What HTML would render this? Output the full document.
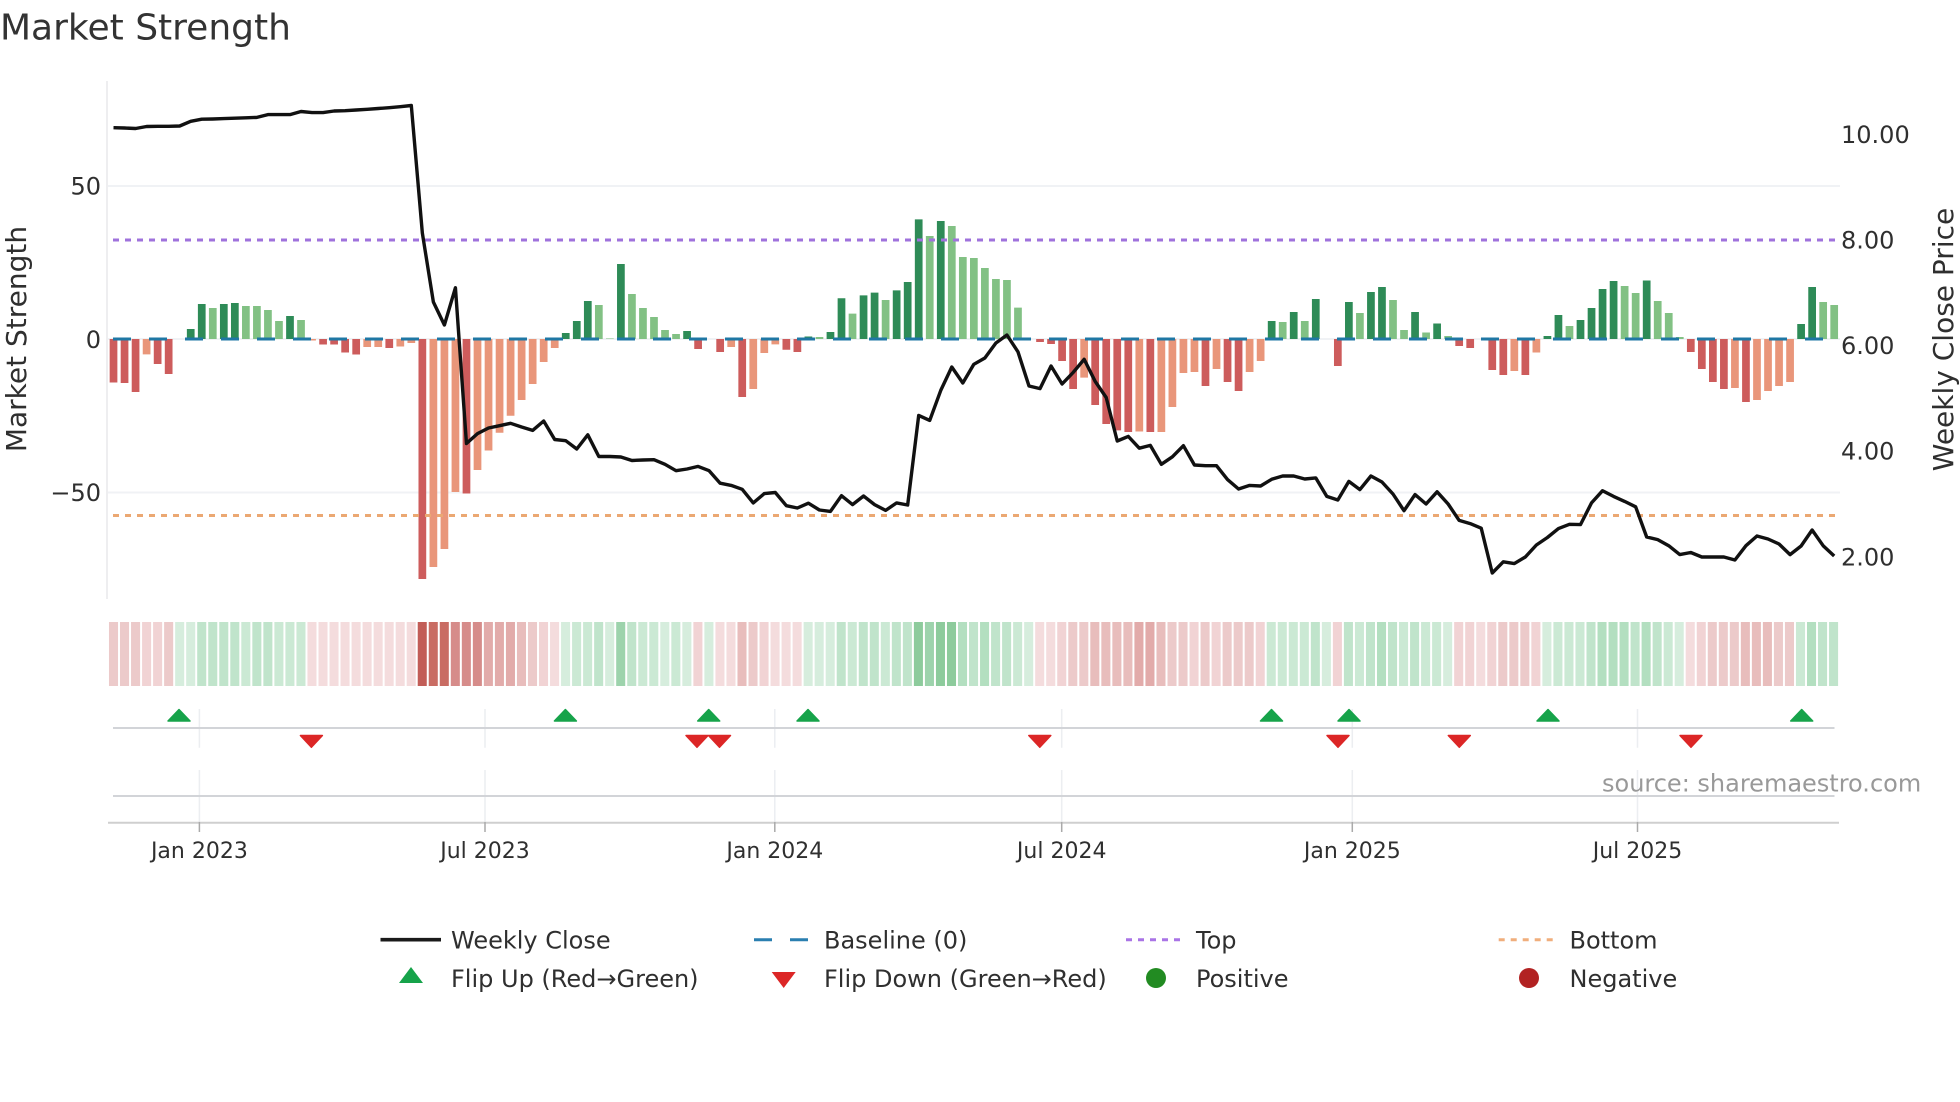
<!DOCTYPE html>
<html><head><meta charset="utf-8"><title>Market Strength</title>
<style>
html,body{margin:0;padding:0;background:#fff}
svg{display:block}
text{font-family:"DejaVu Sans","Liberation Sans",sans-serif;fill:#2f2f2f}
.t{font-size:24px}.x{font-size:22px;text-anchor:middle}
.l{font-size:24px}
</style></head><body>
<svg width="1960" height="1102" viewBox="0 0 1960 1102" xmlns="http://www.w3.org/2000/svg">
<rect width="1960" height="1102" fill="#fff"/>
<text x="0" y="39.5" style="font-size:36px;fill:#333">Market Strength</text>

<!-- axis / grid -->
<path d="M107 81V599" stroke="#e9e9eb" stroke-width="1.5" fill="none"/>
<path d="M108 186H1840M108 339H1840M108 492.5H1840" stroke="#f0f2f5" stroke-width="2" fill="none"/>

<!-- bars -->
<g transform="translate(108,339) scale(11.03,1)" fill="none" stroke-width=".7">
<path stroke="#2e8b57" d="M7.5 0V-10M8.5 0V-35M10.5 0V-35M11.5 0V-36M16.5 0V-23M41.5 0V-6M42.5 0V-18M43.5 0V-38M46.5 0V-75M52.5 0V-8M63.5 0V-2.5M65.5 0V-7M66.5 0V-40.7M68.5 0V-43.6M69.5 0V-46.4M71.5 0V-48.6M72.5 0V-57M73.5 0V-119.6M75.5 0V-118M105.5 0V-18M107.5 0V-27M109.5 0V-40M112.5 0V-37M114.5 0V-47M115.5 0V-52M118.5 0V-27M120.5 0V-15.5M130.5 0V-3M131.5 0V-24M133.5 0V-19M134.5 0V-31M135.5 0V-50M136.5 0V-58M139.5 0V-58.5M153.5 0V-15M154.5 0V-52"/>
<path stroke="#82c184" d="M9.5 0V-31M12.5 0V-33M13.5 0V-33M14.5 0V-29M15.5 0V-18M17.5 0V-19M44.5 0V-34M45.5 0V-.5M47.5 0V-45M48.5 0V-31M49.5 0V-22M50.5 0V-9M51.5 0V-5M64.5 0V-2M67.5 0V-25.4M70.5 0V-39M74.5 0V-103M76.5 0V-113M77.5 0V-82M78.5 0V-81M79.5 0V-71M80.5 0V-60M81.5 0V-59M82.5 0V-31.4M106.5 0V-17M108.5 0V-18M113.5 0V-26M116.5 0V-39M117.5 0V-9M119.5 0V-6.5M121.5 0V-3M132.5 0V-13M137.5 0V-53M138.5 0V-46M140.5 0V-38M141.5 0V-26M142.5 0V-2M155.5 0V-37M156.5 0V-34"/>
<path stroke="#cd5c5c" d="M.5 0V43.5M1.5 0V44M2.5 0V53M4.5 0V25M5.5 0V35M19.5 0V5.5M20.5 0V5.5M21.5 0V13.5M22.5 0V15.5M25.5 0V9M28.5 0V240M32.5 0V154.5M53.5 0V10M55.5 0V13M57.5 0V58M61.5 0V10.7M62.5 0V13M84.5 0V3M85.5 0V5M86.5 0V22M87.5 0V50M89.5 0V66M90.5 0V85M91.5 0V91.4M92.5 0V93M94.5 0V93M99.5 0V47M101.5 0V43M102.5 0V52M111.5 0V27M122.5 0V7M123.5 0V9M125.5 0V31M126.5 0V36M128.5 0V36M143.5 0V13M144.5 0V30M145.5 0V43M146.5 0V50M148.5 0V63"/>
<path stroke="#e9967a" d="M3.5 0V15.4M18.5 0V1.5M23.5 0V8M24.5 0V8M26.5 0V7.5M27.5 0V4M29.5 0V228M30.5 0V210M31.5 0V153M33.5 0V131M34.5 0V111.5M35.5 0V93.7M36.5 0V76.7M37.5 0V61M38.5 0V45M39.5 0V23M40.5 0V9M56.5 0V8M58.5 0V50M59.5 0V14M60.5 0V5.4M88.5 0V38.6M93.5 0V92.5M95.5 0V93M96.5 0V68M97.5 0V34M98.5 0V33M100.5 0V30M103.5 0V33M104.5 0V22M127.5 0V32M129.5 0V13.5M147.5 0V49M149.5 0V61M150.5 0V52M151.5 0V47M152.5 0V43"/>
</g>

<!-- reference lines -->
<path d="M113 339H1836" stroke="#1f77a4" stroke-width="3" stroke-dasharray="18 18" fill="none"/>
<path d="M113 240H1836" stroke="#9f72dc" stroke-width="3" stroke-dasharray="6 6" fill="none"/>
<path d="M113 515.5H1836" stroke="#eba873" stroke-width="3" stroke-dasharray="6 6" fill="none"/>

<!-- price line -->
<g transform="translate(113.5,0) scale(11.03,1)">
<polyline vector-effect="non-scaling-stroke" fill="none" stroke="#111" stroke-width="3.4" stroke-linejoin="round" points="0,127.7 1,128 2,128.5 3,126.5 4,126.3 5,126.3 6,126 7,121.3 8,119.2 9,119 10,118.6 11,118.2 12,117.8 13,117.4 14,114.6 15,114.6 16,114.6 17,111.5 18,112.6 19,112.6 20,111 21,110.7 22,110 23,109.3 24,108.5 25,107.7 26,106.7 27,105.5 28,233 29,302 30,325 31,287.7 32,443.5 33,433.6 34,428 35,425.7 36,423.3 37,427 38,430.4 39,421 40,439.5 41,440.7 42,449 43,434.8 44,456.5 45,456.5 46,457 47,460.5 48,460 49,459.7 50,464.3 51,470.7 52,469 53,466.4 54,470.7 55,483.2 56,485.4 57,489.3 58,502.9 59,493.6 60,492.5 61,505.7 62,508 63,503.2 64,510 65,511.4 66,495.7 67,504.6 68,496 69,504.6 70,510.4 71,502.9 72,505 73,415.4 74,420.4 75,390.4 76,367 77,383 78,364.3 79,358 80,343 81,335 82,351.8 83,386 84,388.6 85,366 86,384 87,372.5 88,359.3 89,381.4 90,397.5 91,441 92,436.4 93,448.2 94,445.4 95,464.3 96,456.8 97,445.7 98,465 99,465.7 100,465.7 101,479.6 102,489 103,485.4 104,486 105,479.3 106,476 107,476 108,479 109,477.9 110,496.4 111,500 112,481.4 113,489.6 114,476 115,482 116,494 117,510.7 118,494.6 119,504 120,491.8 121,504 122,520.4 123,523.6 124,528.2 125,573 126,561.8 127,563.6 128,557 129,545 130,537.5 131,528.6 132,524.3 133,524.6 134,502.9 135,490.7 136,496.4 137,501.4 138,506.8 139,537 140,539.6 141,545.7 142,554.6 143,552.5 144,557 145,557 146,557 147,560 148,545.7 149,536 150,539 151,544 152,554.6 153,546 154,530 155,545.7 156,556"/>
</g>

<!-- heat strip -->
<g transform="translate(108,0) scale(11.026,1)" fill="none" stroke-width=".82">
<path stroke="#f4dcdd" d="M18.5 622v64M19.5 622v64M20.5 622v64M21.5 622v64M22.5 622v64M23.5 622v64M24.5 622v64M25.5 622v64M26.5 622v64M27.5 622v64M40.5 622v64M55.5 622v64M56.5 622v64M60.5 622v64M61.5 622v64M62.5 622v64M84.5 622v64M85.5 622v64M124.5 622v64M143.5 622v64"/>
<path stroke="#f1d3d4" d="M3.5 622v64M4.5 622v64M39.5 622v64M53.5 622v64M59.5 622v64M86.5 622v64M98.5 622v64M100.5 622v64M104.5 622v64M111.5 622v64M122.5 622v64M123.5 622v64M125.5 622v64M129.5 622v64M144.5 622v64"/>
<path stroke="#eccaca" d="M0.5 622v64M1.5 622v64M2.5 622v64M5.5 622v64M38.5 622v64M58.5 622v64M87.5 622v64M88.5 622v64M96.5 622v64M97.5 622v64M99.5 622v64M101.5 622v64M102.5 622v64M103.5 622v64M126.5 622v64M127.5 622v64M128.5 622v64M145.5 622v64M146.5 622v64M147.5 622v64M151.5 622v64M152.5 622v64"/>
<path stroke="#e8bdbc" d="M37.5 622v64M57.5 622v64M89.5 622v64M90.5 622v64M91.5 622v64M92.5 622v64M95.5 622v64M148.5 622v64M149.5 622v64M150.5 622v64"/>
<path stroke="#e2abaa" d="M34.5 622v64M35.5 622v64M36.5 622v64M93.5 622v64M94.5 622v64"/>
<path stroke="#d68c8a" d="M31.5 622v64M32.5 622v64M33.5 622v64"/>
<path stroke="#c96c63" d="M29.5 622v64M30.5 622v64"/>
<path stroke="#c25d57" d="M28.5 622v64"/>
<path stroke="#d6eddd" d="M6.5 622v64M7.5 622v64M41.5 622v64M45.5 622v64M50.5 622v64M52.5 622v64M54.5 622v64M63.5 622v64M64.5 622v64M65.5 622v64M83.5 622v64M110.5 622v64M121.5 622v64M130.5 622v64M142.5 622v64"/>
<path stroke="#cbe9d4" d="M12.5 622v64M15.5 622v64M16.5 622v64M17.5 622v64M42.5 622v64M43.5 622v64M48.5 622v64M49.5 622v64M51.5 622v64M67.5 622v64M70.5 622v64M82.5 622v64M105.5 622v64M106.5 622v64M107.5 622v64M108.5 622v64M113.5 622v64M117.5 622v64M119.5 622v64M120.5 622v64M131.5 622v64M132.5 622v64M133.5 622v64M141.5 622v64M153.5 622v64"/>
<path stroke="#c0e4cb" d="M8.5 622v64M9.5 622v64M10.5 622v64M11.5 622v64M13.5 622v64M14.5 622v64M44.5 622v64M47.5 622v64M66.5 622v64M68.5 622v64M69.5 622v64M71.5 622v64M72.5 622v64M78.5 622v64M80.5 622v64M81.5 622v64M109.5 622v64M112.5 622v64M114.5 622v64M116.5 622v64M118.5 622v64M134.5 622v64M138.5 622v64M140.5 622v64M155.5 622v64M156.5 622v64"/>
<path stroke="#b3dfc0" d="M77.5 622v64M79.5 622v64M115.5 622v64M135.5 622v64M136.5 622v64M137.5 622v64M139.5 622v64M154.5 622v64"/>
<path stroke="#9dd3ac" d="M46.5 622v64M74.5 622v64"/>
<path stroke="#8dcb9c" d="M73.5 622v64M75.5 622v64M76.5 622v64"/>
</g>

<!-- flips panel -->
<path d="M199.4 709V747.7M485 709V747.7M774.8 709V747.7M1061.7 709V747.7M1352.3 709V747.7M1637.5 709V747.7M199.4 770V822M485 770V822M774.8 770V822M1061.7 770V822M1352.3 770V822M1637.5 770V822" stroke="#eceef1" stroke-width="1.5" fill="none"/>
<path d="M113 728H1834.5M113 796H1834.5" stroke="#d2d4d8" stroke-width="2" fill="none"/>
<path d="M108 822.7H1839" stroke="#cfcfcf" stroke-width="2" fill="none"/>
<path d="M199.4 822V832M485 822V832M774.8 822V832M1061.7 822V832M1352.3 822V832M1637.5 822V832" stroke="#aaa" stroke-width="1.5" fill="none"/>
<g fill="#16a34a" stroke="#16a34a" stroke-width="1.5" stroke-linejoin="round">
<polygon points="179,709.5 168,721 190,721"/>
<polygon points="565.4,709.5 554.4,721 576.4,721"/>
<polygon points="708.7,709.5 697.7,721 719.7,721"/>
<polygon points="808,709.5 797,721 819,721"/>
<polygon points="1271.5,709.5 1260.5,721 1282.5,721"/>
<polygon points="1349,709.5 1338,721 1360,721"/>
<polygon points="1548,709.5 1537,721 1559,721"/>
<polygon points="1801.7,709.5 1790.7,721 1812.7,721"/>
</g>
<g fill="#dc2626" stroke="#dc2626" stroke-width="1.5" stroke-linejoin="round">
<polygon points="311.4,747.3 300.4,735.5 322.4,735.5"/>
<polygon points="697,747.3 686,735.5 708,735.5"/>
<polygon points="719.5,747.3 708.5,735.5 730.5,735.5"/>
<polygon points="1039.8,747.3 1028.8,735.5 1050.8,735.5"/>
<polygon points="1338,747.3 1327,735.5 1349,735.5"/>
<polygon points="1459.3,747.3 1448.3,735.5 1470.3,735.5"/>
<polygon points="1691,747.3 1680,735.5 1702,735.5"/>
</g>

<!-- tick labels -->
<text class="t" x="101" y="194.5" text-anchor="end">50</text>
<text class="t" x="101" y="348" text-anchor="end">0</text>
<text class="t" x="101" y="501" text-anchor="end">−50</text>
<text class="t" x="1841" y="143">10.00</text>
<text class="t" x="1841" y="248.5">8.00</text>
<text class="t" x="1841" y="354">6.00</text>
<text class="t" x="1841" y="459.5">4.00</text>
<text class="t" x="1841" y="565.5">2.00</text>
<text class="x" x="199.4" y="858">Jan 2023</text>
<text class="x" x="485" y="858">Jul 2023</text>
<text class="x" x="774.8" y="858">Jan 2024</text>
<text class="x" x="1061.7" y="858">Jul 2024</text>
<text class="x" x="1352.3" y="858">Jan 2025</text>
<text class="x" x="1637.5" y="858">Jul 2025</text>

<text transform="translate(26,339) rotate(-90)" text-anchor="middle" style="font-size:28px">Market Strength</text>
<text transform="translate(1953,339.5) rotate(-90)" text-anchor="middle" style="font-size:28px">Weekly Close Price</text>

<text x="1602" y="791.7" style="font-size:24px;fill:#999">source: sharemaestro.com</text>

<!-- legend -->
<path d="M380.5 939.7H441" stroke="#1a1a1a" stroke-width="3.6" fill="none"/>
<text class="l" x="451" y="948.5">Weekly Close</text>
<path d="M754 939.7H772M790 939.7H808" stroke="#2a7fb0" stroke-width="3" fill="none"/>
<text class="l" x="824" y="948.5">Baseline (0)</text>
<path d="M1126 939.7H1181" stroke="#a974e6" stroke-width="3" stroke-dasharray="6 6" fill="none"/>
<text class="l" x="1196" y="948.5">Top</text>
<path d="M1498.7 939.7H1553.6" stroke="#f0ae7c" stroke-width="3" stroke-dasharray="6 6" fill="none"/>
<text class="l" x="1569.5" y="948.5">Bottom</text>
<polygon points="411,967 399,983 423,983" fill="#16a34a"/>
<text class="l" x="451" y="987">Flip Up (Red→Green)</text>
<polygon points="783.7,988 771.7,972 795.7,972" fill="#dc2626"/>
<text class="l" x="824" y="987">Flip Down (Green→Red)</text>
<circle cx="1156" cy="978" r="10" fill="#228b22"/>
<text class="l" x="1196" y="987">Positive</text>
<circle cx="1529" cy="978" r="10" fill="#b22222"/>
<text class="l" x="1569.5" y="987">Negative</text>
</svg>
</body></html>
